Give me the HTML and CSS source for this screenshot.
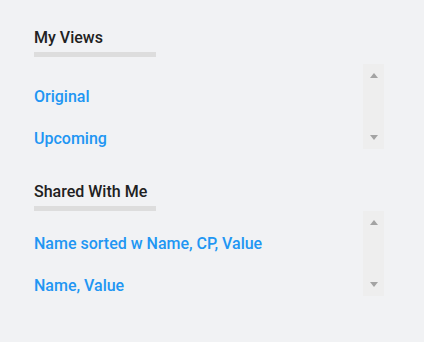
FILE: index.html
```html
<!DOCTYPE html>
<html>
<head>
<meta charset="utf-8">
<link rel="stylesheet" href="styles.css">
</head>
<body>
<div class="panel">
  <section class="group first">
    <h2 class="title">My Views</h2>
    <div class="rule"></div>
    <div class="box">
      <ul class="list">
        <li><a class="link">Original</a></li>
        <li><a class="link">Upcoming</a></li>
      </ul>
      <div class="scroll">
        <span class="arrow up"></span>
        <span class="arrow down"></span>
      </div>
    </div>
  </section>
  <section class="group second">
    <h2 class="title">Shared With Me</h2>
    <div class="rule"></div>
    <div class="box">
      <ul class="list">
        <li><a class="link">Name sorted w Name, CP, Value</a></li>
        <li><a class="link">Name, Value</a></li>
      </ul>
      <div class="scroll">
        <span class="arrow up"></span>
        <span class="arrow down"></span>
      </div>
    </div>
  </section>
</div>
</body>
</html>
```
FILE: styles.css
```css
html, body {
  margin: 0;
  padding: 0;
  background: #f1f2f4;
}
body {
  font-family: Roboto, "Liberation Sans", sans-serif;
  width: 424px;
  height: 342px;
  overflow: hidden;
}
.panel {
  padding: 28px 0 0 34px;
  width: 350px;
}
.group.second {
  margin-top: 33px;
}
.title {
  margin: 0;
  font-size: 16px;
  line-height: 20px;
  font-weight: 500;
  color: #212121;
}
.rule {
  margin-top: 4px;
  width: 122px;
  height: 5px;
  background: #dddddd;
}
.first .box {
  margin-top: 7px;
}
.box {
  display: flex;
  height: 85px;
}
.list {
  flex: 1;
  margin: 0;
  padding: 12px 0 0 0;
  list-style: none;
  overflow: hidden;
}
.list li {
  line-height: 42px;
  height: 42px;
}
.link {
  font-size: 16px;
  font-weight: 500;
  color: #2196f3;
  text-decoration: none;
}
.scroll {
  width: 21px;
  background: #eeeeee;
  display: flex;
  flex-direction: column;
  justify-content: space-between;
  align-items: center;
  padding: 9px 0 9px 0;
  box-sizing: border-box;
}
.arrow {
  width: 0;
  height: 0;
  border-left: 4.5px solid transparent;
  border-right: 4.5px solid transparent;
}
.arrow.up {
  border-bottom: 5px solid #a3a3a3;
}
.arrow.down {
  border-top: 5px solid #a3a3a3;
}
```
